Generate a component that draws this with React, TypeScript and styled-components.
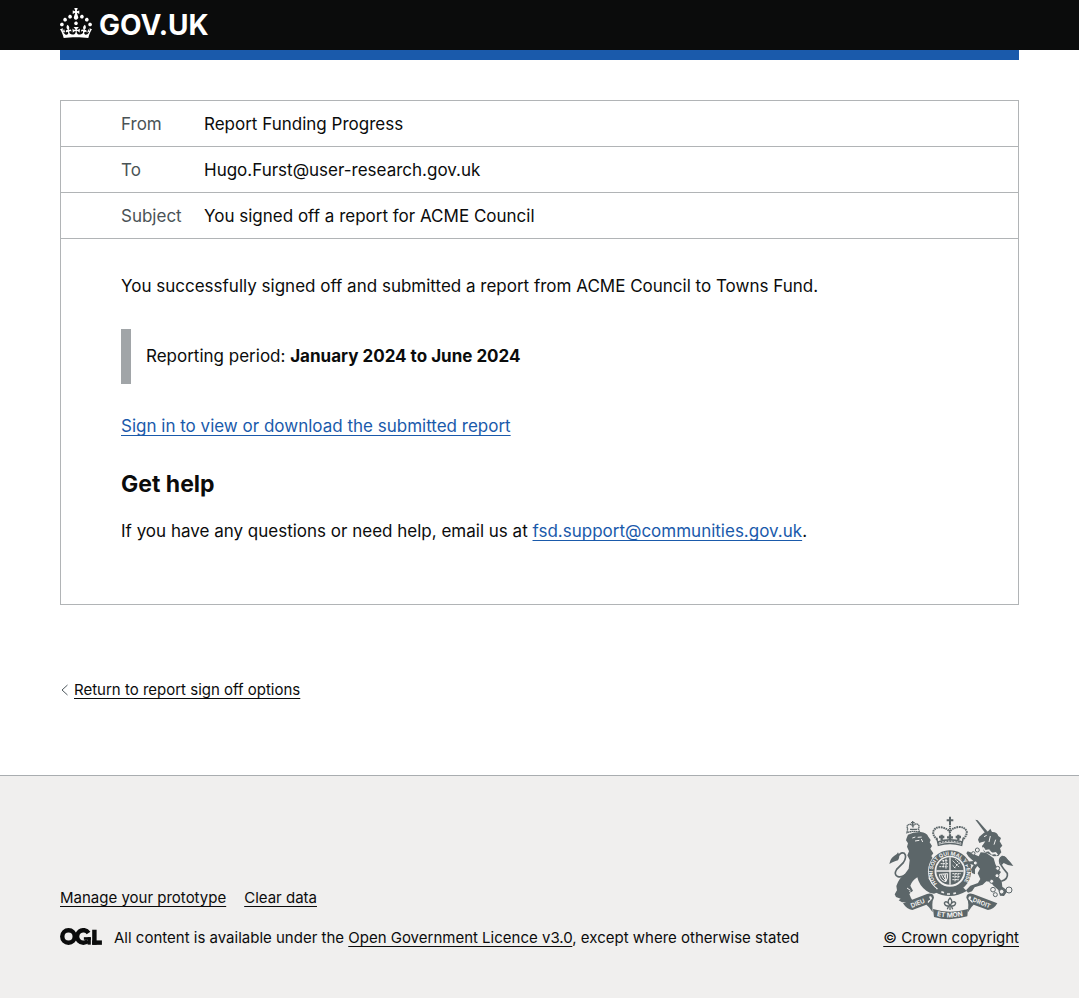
import React from "react";
import styled, { createGlobalStyle } from "styled-components";

const GlobalStyle = createGlobalStyle`
  *, *::before, *::after { box-sizing: border-box; }
  body {
    margin: 0;
    background: #ffffff;
    color: #0b0c0c;
    font-family: Inter, "Liberation Sans", sans-serif;
    font-size: 17px;
    line-height: 25px;
  }
`;

const Page = styled.div`
  display: flex;
  flex-direction: column;
  min-height: 100vh;
`;

const Container = styled.div`
  margin: 0 60px;
`;

const Header = styled.header`
  background: #0b0c0c;
`;

const HomeLink = styled.a`
  display: inline-flex;
  align-items: center;
  gap: 7px;
  height: 50px;
  color: #ffffff;
  font-size: 28px;
  font-weight: 700;
  line-height: 30px;
  text-decoration: none;
  vertical-align: top;
`;

const CrownMark = styled.svg`
  display: block;
  width: 32px;
  height: 30px;
  fill: currentColor;
  margin-bottom: 5px;
`;

const BrandBar = styled.div`
  height: 10px;
  background: #1a5aab;
`;

const Main = styled.main`
  padding: 40px 0 75px;
`;

const Email = styled.article`
  border: 1px solid #b1b4b6;
`;

const EmailHeaders = styled.dl`
  margin: 0;
`;

const HeaderRow = styled.div`
  display: grid;
  grid-template-columns: 83px 1fr;
  padding: 11px 60px 9px;
  border-bottom: 1px solid #b1b4b6;
`;

const HeaderName = styled.dt`
  color: #4a5356;
`;

const HeaderValue = styled.dd`
  margin: 0;
`;

const EmailBody = styled.div`
  padding: 35px 60px 60px;
`;

const Paragraph = styled.p`
  margin: 0;
`;

const Inset = styled.div`
  margin: 30px 0;
  padding: 15px;
  border-left: 10px solid #a1a5a8;
`;

const Heading = styled.h2`
  margin: 30px 0 20px;
  font-size: 23px;
  font-weight: 700;
  line-height: 30px;
`;

const Link = styled.a<{ $plain?: boolean }>`
  color: ${(p) => (p.$plain ? "#0b0c0c" : "#1a5aab")};
  text-decoration: underline;
  text-decoration-thickness: 1px;
  text-decoration-skip-ink: none;
  text-underline-offset: 3px;
`;

const BackNav = styled.nav`
  display: flex;
  align-items: center;
  gap: 5px;
  margin-top: 75px;
  font-size: 15px;
  line-height: 20px;
`;

const Chevron = styled.svg`
  width: 9px;
  height: 12px;
  fill: none;
  stroke: #505a5f;
`;

const Footer = styled.footer`
  flex: 1;
  padding: 40px 0 50px;
  border-top: 1px solid #a9adb0;
  background: #f0efee;
  font-size: 15px;
  line-height: 20px;
`;

const FooterMeta = styled.div`
  display: flex;
  flex-wrap: wrap;
  justify-content: space-between;
  align-items: flex-end;
  gap: 20px;
`;

const FooterLinks = styled.ul`
  display: flex;
  gap: 18px;
  margin: 0 0 20px;
  padding: 0;
  list-style: none;
`;

const Licence = styled.div`
  display: flex;
  align-items: center;
  gap: 12px;
`;

const OglMark = styled.svg`
  width: 42px;
  height: 17px;
  flex: none;
  margin-bottom: 3px;
`;

const Copyright = styled.a`
  display: flex;
  flex-direction: column;
  align-items: center;
  gap: 8px;
  color: #0b0c0c;
  text-decoration: underline;
  text-decoration-thickness: 1px;
  text-decoration-skip-ink: none;
  text-underline-offset: 3px;
`;

const Arms = styled.svg`
  display: block;
  width: 126px;
  height: 104px;
`;

const Crown = () => (
  <CrownMark viewBox="0 0 32 30" aria-hidden="true">
    <path d="M22.6 10.4c-1 .4-2-.1-2.4-1-.4-.9.1-2 1-2.4.9-.4 2 .1 2.4 1s-.1 2-1 2.4m-5.9 6.7c-.9.4-2-.1-2.4-1-.4-.9.1-2 1-2.4.9-.4 2 .1 2.4 1s-.1 2-1 2.4m10.8-3.7c-1 .4-2-.1-2.4-1-.4-.9.1-2 1-2.4.9-.4 2 .1 2.4 1s0 2-1 2.4m3.3 4.8c-1 .4-2-.1-2.4-1-.4-.9.1-2 1-2.4.9-.4 2 .1 2.4 1s-.1 2-1 2.4M17 4.7l2.3 1.2V2.5l-2.3.7-.2-.2.9-3h-3.4l.9 3-.2.2c-.1.1-2.3-.7-2.3-.7v3.4L15 4.7c.1.1.1.2.2.2l-1.3 4c-.1.2-.1.4-.1.6 0 1.1.8 2 1.9 2.2h.7c1-.2 1.9-1.1 1.9-2.1 0-.2 0-.4-.1-.6l-1.3-4c-.1-.2 0-.2.1-.3m-7.6 5.7c.9.4 2-.1 2.4-1 .4-.9-.1-2-1-2.4-.9-.4-2 .1-2.4 1s0 2 1 2.4m-5 3c.9.4 2-.1 2.4-1 .4-.9-.1-2-1-2.4-.9-.4-2 .1-2.4 1s.1 2 1 2.4m-3.2 4.8c.9.4 2-.1 2.4-1 .4-.9-.1-2-1-2.4-.9-.4-2 .1-2.4 1s0 2 1 2.4m14.8 11c4.4 0 8.6.3 12.3.8 1.1-4.5 2.4-7 3.7-8.8l-2.5-.9c.2 1.3.3 1.9 0 2.7-.4-.4-.8-1.1-1.1-2.3l-1.2 4c.7-.5 1.3-.8 2-.9-1.1 2.5-2.6 3.1-3.5 3-1.1-.2-1.7-1.2-1.5-2.1.3-1.2 1.5-1.5 2.1-.1 1.1-2.3-.8-3-2-2.3 1.9-1.9 2.1-3.5.6-5.6-2.1 1.6-2.1 3.2-1.2 5.5-1.2-1.4-3.2-.6-2.5 1.6.9-1.4 2.1-.5 1.9.8-.2 1.1-1.7 2.1-3.5 1.9-2.7-.2-2.9-2.1-2.9-3.6.7-.1 1.9.5 2.9 1.9l.4-4.3c-1.1 1.1-2.1 1.4-3.2 1.4.4-1.2 2.1-3 2.1-3h-5.4s1.7 1.9 2.1 3c-1.1 0-2.1-.2-3.2-1.4l.4 4.3c1-1.4 2.2-2 2.9-1.9-.1 1.5-.2 3.4-2.9 3.6-1.9.2-3.4-.8-3.5-1.9-.2-1.3 1-2.2 1.9-.8.7-2.3-1.2-3-2.5-1.6.9-2.2.9-3.9-1.2-5.5-1.5 2-1.3 3.7.6 5.6-1.2-.7-3.1 0-2 2.3.6-1.4 1.8-1.1 2.1.1.2.9-.3 1.9-1.5 2.1-.9.2-2.4-.5-3.5-3 .6 0 1.2.3 2 .9l-1.2-4c-.3 1.1-.7 1.9-1.1 2.3-.3-.8-.2-1.4 0-2.7l-2.9.9C1.3 23 2.6 25.5 3.7 30c3.7-.5 7.9-.8 12.3-.8" />
  </CrownMark>
);

const OglLogo = () => (
  <OglMark viewBox="0 0 484 196" role="img" aria-label="Open Government Licence">
    <g fill="none" stroke="#0b0c0c" strokeWidth="51">
      <circle cx="98" cy="98" r="72" />
      <path d="M329 58A72 72 0 1 0 322 146" />
    </g>
    <g fill="#0b0c0c">
      <rect x="275" y="106" width="80" height="30" />
      <rect x="318" y="106" width="37" height="86" />
      <rect x="371" y="20" width="51" height="173" />
      <rect x="371" y="143" width="112" height="51" />
    </g>
  </OglMark>
);

const ink = "#5c6669";
const paper = "#f0efee";

const RoyalArms = () => (
  <Arms viewBox="30 30 378 312" aria-hidden="true" fontFamily="Inter, sans-serif" fontWeight="700">
    <defs>
      <path id="garter" d="M177 233A51 51 0 1 1 253 233" />
      <path id="motto" d="M176 330Q216 339 262 328" />
    </defs>

    {/* lion */}
    <g fill={ink}>
      <path d="M90 86L106 80L128 78Q146 80 151 92L158 102L155 109L162 120L157 128L166 142L160 150L169 164L160 175L163 192L158 206L151 216L160 232L172 243L181 258L168 263L155 260L145 254Q124 240 118 214Q102 224 97 239L105 254L94 264L99 276L103 283L94 289L72 289L62 283L68 278L54 273L50 265L57 253L55 240Q62 217 81 203L92 188L95 162L88 148L93 136L87 122L90 112L84 103L86 96Z" />
      <path d="M34 174Q37 156 49 149Q57 147 60 139Q68 151 60 163Q51 165 34 174Z" />
      <path d="M56 156Q68 136 79 142Q88 151 76 170L56 190Q46 206 60 212Q70 215 82 207" fill="none" stroke={ink} strokeWidth="5" />
      <path d="M87 80L89 68Q84 58 94 55Q102 53 105 64Q107 52 117 54Q127 58 121 68L125 78Q104 73 87 80Z" fill="none" stroke={ink} strokeWidth="4" strokeDasharray="5 1" />
      <path d="M104 45v12M99 50h11M96 70h22" stroke={ink} strokeWidth="4" />
    </g>
    <path d="M103 96l9-3M119 94l12-1M111 105l13-2M130 99l4 9M97 253l-10-7M104 263l-10-7" stroke={paper} strokeWidth="3" />

    {/* state crown */}
    <g fill="none" stroke={ink}>
      <path d="M178 101Q163 88 166 76Q172 62 190 64Q210 68 215 78Q222 66 242 63Q260 62 266 76Q268 88 254 101" strokeWidth="6" strokeDasharray="5 2" />
      <path d="M216 60V86" strokeWidth="6" strokeDasharray="4 2" />
      <path d="M216 32V58M206 43H226" strokeWidth="6" />
      <path d="M191 86v16M183 93h16M216 86v16M207 94h18M241 86v16M233 93h16" strokeWidth="7" />
      <path d="M176 95L181 118Q216 107 251 118L256 95" strokeWidth="4" />
      <path d="M180 110Q216 97 252 110" strokeWidth="9" />
      <path d="M183 111Q216 100 249 111" stroke={paper} strokeWidth="3" strokeDasharray="5 4" />
    </g>

    {/* garter and shield */}
    <circle cx="216" cy="196" r="66" fill={paper} />
    <circle cx="216" cy="196" r="55" fill="none" stroke={ink} strokeWidth="17" />
    <text fill={paper} fontSize="16">
      <textPath href="#garter">HONI SOIT QUI MAL Y PENSE</textPath>
    </text>
    <circle cx="216" cy="195" r="41" fill={ink} />
    <path d="M216 154V236M175 195H257" stroke={paper} strokeWidth="4" />
    <g stroke={paper} strokeWidth="3" fill="none">
      <path d="M188 173h22M184 182h26M193 164h17M196 162v24M204 158v30" strokeDasharray="6 2" />
      <path d="M223 203h26M223 212h24M223 221h18M231 203v25M240 203v20" strokeDasharray="6 2" />
      <path d="M224 164l20 20M228 186l16-16M224 178l10 10M232 160l15 15" strokeDasharray="5 2" />
      <path d="M184 205q2 20 20 22q6-10 5-24zM190 205q3 12 14 20M197 204q2 10 9 18M203 204v20" />
    </g>
    <path d="M183 244Q216 270 254 243L266 255Q240 270 216 270Q190 270 171 258Z" fill={ink} />
    <path d="M190 257l8 3M207 264h9M226 263l8-2" stroke={paper} strokeWidth="5" />

    {/* unicorn */}
    <g fill={ink}>
      <path d="M292 41L299 43L328 76L322 82Z" />
      <path d="M300 101L304 92L318 80L331 75L337 68L342 78Q357 77 361 90L369 96L365 106L373 119L366 127L370 139L361 150L347 151L338 146L318 137L312 121L322 106L310 109L304 111Z" />
      <path d="M308 139L324 140L347 157L352 174L360 190L369 198L360 211L371 226L373 242L389 254L378 270L366 269L361 252L345 238L339 228L325 226L314 236L290 244L282 256L270 260L264 253L277 239L300 231L307 219L299 202L306 188L298 180L291 190L291 205L282 201L279 190L287 177L277 174L280 181L271 184L267 167L286 165L272 152L265 142L269 136L281 140L288 145L302 151Z" />
      <path d="M371 178Q360 163 371 154Q379 146 385 158Q394 162 406 180Q388 178 377 171Z" />
      <path d="M370 226Q391 219 388 202Q374 186 366 172Q362 157 372 152Q382 150 391 169" fill="none" stroke={ink} strokeWidth="5" />
    </g>
    <path d="M314 124L323 135L333 133L342 143L353 141L358 147" fill="none" stroke={paper} strokeWidth="6" />
    <path d="M315 118L322 130L330 126L340 137L350 132L359 143" fill="none" stroke={ink} strokeWidth="3" strokeDasharray="4 2" />
    <path d="M318 92l8-4M337 90l-4 18M353 101l-5 15" stroke={paper} strokeWidth="3" />
    <g fill={paper} stroke={ink} strokeWidth="3">
      <circle cx="298" cy="132" r="6" />
      <circle cx="286" cy="142" r="5" />
      <circle cx="292" cy="171" r="6" />
      <circle cx="359" cy="187" r="6" />
      <circle cx="357" cy="209" r="6" />
      <circle cx="341" cy="226" r="6" />
      <circle cx="345" cy="251" r="7" />
      <circle cx="352" cy="266" r="6" />
      <circle cx="371" cy="257" r="7" />
      <circle cx="393" cy="252" r="9" />
    </g>

    {/* motto ribbon */}
    <path d="M75 292L147 264Q166 259 168 275Q162 285 163 296L164 319L153 304L145 296L103 312Q86 310 75 292Z" fill={ink} />
    <path d="M358 292L285 264Q266 259 265 275Q272 285 271 296L270 319L280 304L287 296L330 312Q348 310 358 292Z" fill={ink} />
    <path d="M153 272Q161 268 162 278L150 292Q147 283 157 281M280 272Q272 268 271 278L283 292Q286 283 277 281" fill={paper} />
    <path d="M165 309Q216 325 270 309L268 331Q216 347 168 333Z" fill={ink} />
    <text fill={paper} fontSize="20"><textPath href="#motto">ET MON</textPath></text>
    <text fill={paper} fontSize="19" transform="translate(101 306) rotate(-22)">DIEU</text>
    <text fill={paper} fontSize="18" transform="translate(283 286) rotate(22)">DROIT</text>
    <path d="M216 276Q205 286 216 298Q227 286 216 276ZM216 298Q204 281 199 291Q200 301 212 300L208 310M216 298Q228 281 233 291Q232 301 220 300L224 310M216 296V312" fill="none" stroke={ink} strokeWidth="4" />
  </Arms>
);

const headers = [
  { name: "From", value: "Report Funding Progress" },
  { name: "To", value: "Hugo.Furst@user-research.gov.uk" },
  { name: "Subject", value: "You signed off a report for ACME Council" },
];

export default function App() {
  return (
    <Page>
      <GlobalStyle />
      <Header>
        <Container>
          <HomeLink href="#">
            <Crown />
            GOV.UK
          </HomeLink>
        </Container>
      </Header>
      <Container>
        <BrandBar />
        <Main>
          <Email>
            <EmailHeaders>
              {headers.map((h) => (
                <HeaderRow key={h.name}>
                  <HeaderName>{h.name}</HeaderName>
                  <HeaderValue>{h.value}</HeaderValue>
                </HeaderRow>
              ))}
            </EmailHeaders>
            <EmailBody>
              <Paragraph>
                You successfully signed off and submitted a report from ACME Council to Towns Fund.
              </Paragraph>
              <Inset>
                Reporting period: <strong>January 2024 to June 2024</strong>
              </Inset>
              <Paragraph>
                <Link href="#">Sign in to view or download the submitted report</Link>
              </Paragraph>
              <Heading>Get help</Heading>
              <Paragraph>
                If you have any questions or need help, email us at{" "}
                <Link href="mailto:fsd.support@communities.gov.uk">fsd.support@communities.gov.uk</Link>.
              </Paragraph>
            </EmailBody>
          </Email>
          <BackNav>
            <Chevron viewBox="0 0 9 12" aria-hidden="true">
              <path d="M7.5 1L2 6l5.500 5" />
            </Chevron>
            <Link $plain href="#">Return to report sign off options</Link>
          </BackNav>
        </Main>
      </Container>
      <Footer>
        <Container>
          <FooterMeta>
            <div>
              <FooterLinks>
                <li><Link $plain href="#">Manage your prototype</Link></li>
                <li><Link $plain href="#">Clear data</Link></li>
              </FooterLinks>
              <Licence>
                <OglLogo />
                <span>
                  All content is available under the{" "}
                  <Link $plain href="#">Open Government Licence v3.0</Link>, except where otherwise stated
                </span>
              </Licence>
            </div>
            <Copyright href="#">
              <RoyalArms />
              © Crown copyright
            </Copyright>
          </FooterMeta>
        </Container>
      </Footer>
    </Page>
  );
}
